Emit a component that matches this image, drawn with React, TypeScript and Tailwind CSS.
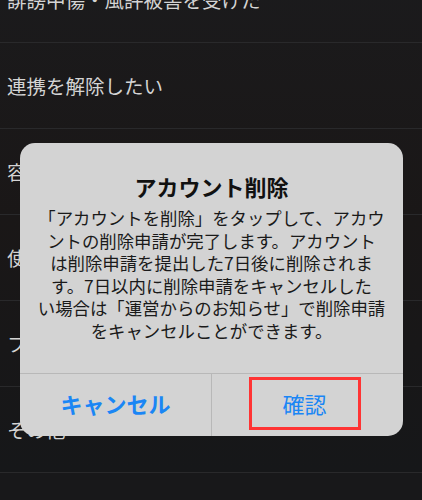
import React from "react";

const rows = [
  "誹謗中傷・風評被害を受けた",
  "連携を解除したい",
  "容量が不足している",
  "使い方がわからない",
  "フォローを解除したい",
  "その他",
];

const bodyLines = [
  "「アカウントを削除」をタップして、アカウ",
  "ントの削除申請が完了します。アカウント",
  "は削除申請を提出した7日後に削除されま",
  "す。7日以内に削除申請をキャンセルした",
  "い場合は「運営からのお知らせ」で削除申請",
  "をキャンセルことができます。",
];

export default function App() {
  return (
    <div
      className="relative h-[500px] w-[422px] overflow-hidden bg-[#18181a]"
      style={{ fontFamily: '"Noto Sans CJK JP", "Noto Sans", sans-serif' }}
    >
      {/* background list */}
      <div className="-mt-[43px] bg-gradient-to-b from-[#1b1b1d] via-[#1a1717] to-[#161719]">
        {rows.map((r) => (
          <div
            key={r}
            className="flex h-[86px] items-center border-b border-[#29292b] pl-[7px] text-[19.5px] text-[#d4d4d4]"
          >
            {r}
          </div>
        ))}
      </div>

      {/* alert dialog */}
      <div className="absolute left-[20px] top-[143px] flex w-[383px] flex-col overflow-hidden rounded-[15px] bg-[#d3d3d3]">
        <div className="flex h-[230px] flex-col items-center pt-[29px]">
          <div className="text-[22px] font-bold leading-[28px] text-[#111]">アカウント削除</div>
          <div className="mt-[7px] text-center text-[17.4px] leading-[22.6px] text-[#1a1a1a]">
            {bodyLines.map((l) => (
              <div key={l} className="whitespace-nowrap">
                {l}
              </div>
            ))}
          </div>
        </div>
        <div className="flex h-[63px] border-t border-[#b8b8b8]">
          <div className="flex w-[192px] items-center justify-center border-r border-[#b8b8b8] pb-[3px] text-[22px] font-bold text-[#1a86f5]">
            キャンセル
          </div>
          <div className="flex flex-1 items-center justify-center pb-[4px] pr-[6px]">
            <div className="flex h-[53px] w-[112px] items-center justify-center border-[3px] border-[#ff3434] text-[22px] text-[#1a86f5]">
              確認
            </div>
          </div>
        </div>
      </div>
    </div>
  );
}
